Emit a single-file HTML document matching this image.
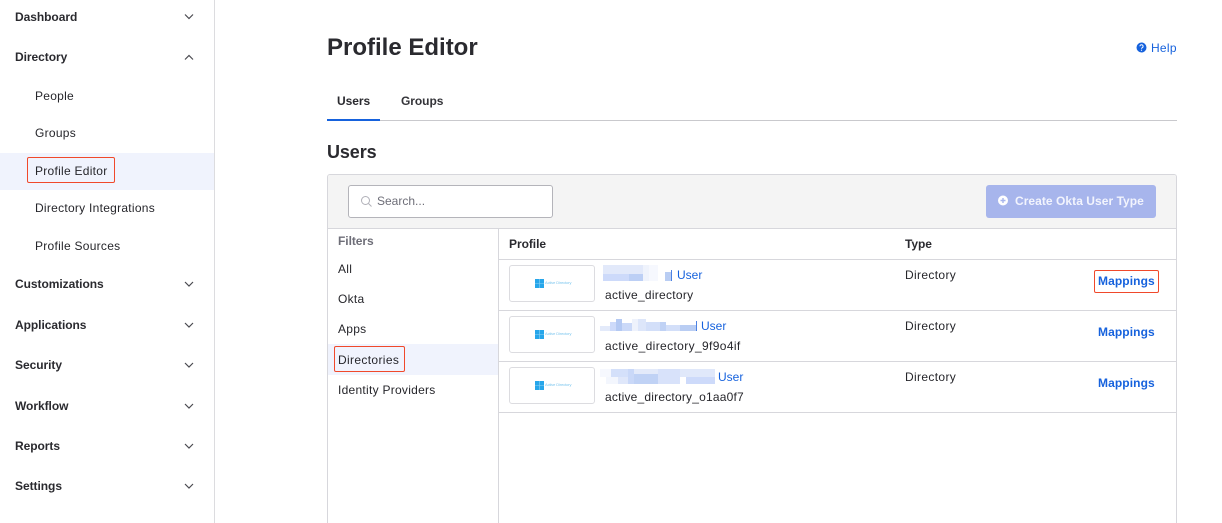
<!DOCTYPE html>
<html><head><meta charset="utf-8">
<style>
html,body{margin:0;padding:0;background:#fff;width:1222px;height:523px;overflow:hidden;}
body{position:relative;font-family:"Liberation Sans",sans-serif;color:#1d1d21;}
.t{position:absolute;white-space:nowrap;font-size:12px;line-height:16px;letter-spacing:.27px;color:#26262b;}
.b{font-weight:bold;letter-spacing:-.05px;color:#2a2a2f;}
.r{position:absolute;}
.red{position:absolute;border:1px solid #f0492b;border-radius:2px;box-sizing:border-box;}
.t.blue{color:#1662dd;}
.thumb{position:absolute;left:509px;width:86px;height:37px;border:1px solid #dcdce0;border-radius:3px;box-sizing:border-box;background:#fff;}
.ad{position:absolute;left:545px;font-size:4px;line-height:6px;letter-spacing:-.1px;color:#7cc6ee;white-space:nowrap;}
svg{position:absolute;overflow:visible;}
</style></head><body>

<!-- sidebar -->
<div class="r" style="left:214px;top:0;width:1px;height:523px;background:#dcdcdf"></div>
<div class="r" style="left:0;top:153px;width:214px;height:37px;background:#f0f3fd"></div>
<div class="t b" style="left:15px;top:9px">Dashboard</div>
<div class="t b" style="left:15px;top:49px">Directory</div>
<div class="t" style="left:35px;top:88px">People</div>
<div class="t" style="left:35px;top:125px">Groups</div>
<div class="t" style="left:35px;top:163px">Profile Editor</div>
<div class="t" style="left:35px;top:200px">Directory Integrations</div>
<div class="t" style="left:35px;top:238px">Profile Sources</div>
<div class="t b" style="left:15px;top:276px">Customizations</div>
<div class="t b" style="left:15px;top:317px">Applications</div>
<div class="t b" style="left:15px;top:357px">Security</div>
<div class="t b" style="left:15px;top:398px">Workflow</div>
<div class="t b" style="left:15px;top:438px">Reports</div>
<div class="t b" style="left:15px;top:478px">Settings</div>
<div class="red" style="left:27px;top:157px;width:88px;height:26px"></div>
<svg style="left:0;top:0" width="214" height="523" fill="none" stroke="#4a4a50" stroke-width="1.2">
<path d="M185 14.500l4 4 4-4"/>
<path d="M185 59.500l4-4 4 4"/>
<path d="M185 282l4 4 4-4"/>
<path d="M185 323l4 4 4-4"/>
<path d="M185 363l4 4 4-4"/>
<path d="M185 404l4 4 4-4"/>
<path d="M185 444l4 4 4-4"/>
<path d="M185 484l4 4 4-4"/>
</svg>

<!-- header -->
<div class="t b" style="left:327px;top:33px;font-size:24px;line-height:30px;letter-spacing:0">Profile Editor</div>
<svg style="left:1136px;top:42px" width="11" height="11"><circle cx="5.500" cy="5.500" r="5" fill="#1662dd"/><path d="M3.900 4.300a1.600 1.600 0 1 1 2.400 1.400c-.5.300-.8.500-.8 1" fill="none" stroke="#fff" stroke-width="1"/><circle cx="5.500" cy="8.200" r=".6" fill="#fff"/></svg>
<div class="t blue" style="left:1151px;top:40px">Help</div>

<!-- tabs -->
<div class="t b" style="left:337px;top:93px">Users</div>
<div class="t b" style="left:401px;top:93px;color:#35353a">Groups</div>
<div class="r" style="left:327px;top:120px;width:850px;height:1px;background:#c9c9cd"></div>
<div class="r" style="left:327px;top:119px;width:53px;height:2px;background:#1662dd"></div>
<div class="t b" style="left:327px;top:141px;font-size:18px;line-height:22px;letter-spacing:-.1px">Users</div>

<!-- panel -->
<div class="r" style="left:327px;top:174px;width:850px;height:349px;border:1px solid #d7d7dc;border-bottom:0;border-radius:3px 3px 0 0;box-sizing:border-box"></div>
<div class="r" style="left:328px;top:175px;width:848px;height:53px;background:#f4f4f4;border-radius:2px 2px 0 0"></div>
<div class="r" style="left:328px;top:228px;width:848px;height:1px;background:#d7d7dc"></div>
<div class="r" style="left:348px;top:185px;width:205px;height:33px;background:#fff;border:1px solid #b4b4ba;border-radius:3px;box-sizing:border-box"></div>
<svg style="left:360px;top:195px" width="13" height="13" fill="none" stroke="#b0b0b8" stroke-width="1"><circle cx="5.500" cy="5.500" r="4"/><path d="M8.500 8.500l3 3"/></svg>
<div class="t" style="left:377px;top:193px;color:#6e6e78;letter-spacing:0">Search...</div>
<div class="r" style="left:986px;top:185px;width:170px;height:33px;background:#a7b5ec;border-radius:3px"></div>
<svg style="left:998px;top:195px" width="11" height="11"><circle cx="5" cy="5.500" r="5" fill="#fff"/><path d="M5 3v5M2.500 5.500h5" stroke="#a7b5ec" stroke-width="1.400"/></svg>
<div class="t b" style="left:1015px;top:193px;color:#f2f4fd;letter-spacing:.05px">Create Okta User Type</div>

<!-- filters -->
<div class="r" style="left:498px;top:229px;width:1px;height:294px;background:#d7d7dc"></div>
<div class="r" style="left:328px;top:344px;width:170px;height:31px;background:#f0f3fd"></div>
<div class="t b" style="left:338px;top:233px;color:#6e6e78">Filters</div>
<div class="t" style="left:338px;top:261px">All</div>
<div class="t" style="left:338px;top:291px">Okta</div>
<div class="t" style="left:338px;top:321px">Apps</div>
<div class="t" style="left:338px;top:352px;letter-spacing:.35px">Directories</div>
<div class="t" style="left:338px;top:382px">Identity Providers</div>
<div class="red" style="left:334px;top:346px;width:71px;height:26px"></div>

<!-- table -->
<div class="t b" style="left:509px;top:236px">Profile</div>
<div class="t b" style="left:905px;top:236px">Type</div>
<div class="r" style="left:499px;top:259px;width:677px;height:1px;background:#d7d7dc"></div>
<div class="r" style="left:499px;top:310px;width:677px;height:1px;background:#d7d7dc"></div>
<div class="r" style="left:499px;top:361px;width:677px;height:1px;background:#d7d7dc"></div>
<div class="r" style="left:499px;top:412px;width:677px;height:1px;background:#d7d7dc"></div>

<!-- thumbs -->
<div class="thumb" style="top:265px"></div>
<div class="thumb" style="top:316px"></div>
<div class="thumb" style="top:367px"></div>
<svg style="left:535px;top:279px" width="9" height="9"><rect width="9" height="9" fill="#27a6ea"/><path d="M4.500 0v9M0 4.500h9" stroke="#8fd2f4" stroke-width=".6"/></svg>
<svg style="left:535px;top:330px" width="9" height="9"><rect width="9" height="9" fill="#27a6ea"/><path d="M4.500 0v9M0 4.500h9" stroke="#8fd2f4" stroke-width=".6"/></svg>
<svg style="left:535px;top:381px" width="9" height="9"><rect width="9" height="9" fill="#27a6ea"/><path d="M4.500 0v9M0 4.500h9" stroke="#8fd2f4" stroke-width=".6"/></svg>
<div class="ad" style="top:280px">Active Directory</div>
<div class="ad" style="top:331px">Active Directory</div>
<div class="ad" style="top:382px">Active Directory</div>

<!-- blurred names -->
<svg style="left:0;top:0" width="1222" height="523" shape-rendering="crispEdges">
<rect x="603" y="265" width="40" height="9" fill="#e2e9fa"/>
<rect x="643" y="265" width="6" height="16" fill="#eff3fc"/>
<rect x="649" y="265" width="9" height="16" fill="#f6f8fe"/>
<rect x="603" y="274" width="26" height="7" fill="#cddafa"/>
<rect x="629" y="274" width="14" height="7" fill="#bccff5"/>
<rect x="665" y="272" width="6" height="9" fill="#b9cdf3"/>
<rect x="671" y="270" width="1" height="11" fill="#4d82e3"/>
<rect x="600" y="326" width="10" height="5" fill="#e3eafa"/>
<rect x="610" y="322" width="6" height="9" fill="#cddafa"/>
<rect x="616" y="319" width="6" height="12" fill="#b4c9f3"/>
<rect x="622" y="323" width="10" height="8" fill="#cbd9f8"/>
<rect x="632" y="319" width="6" height="12" fill="#eef2fc"/>
<rect x="638" y="319" width="8" height="12" fill="#dde6fa"/>
<rect x="646" y="322" width="14" height="9" fill="#d3dff9"/>
<rect x="660" y="322" width="6" height="9" fill="#c0d2f5"/>
<rect x="666" y="325" width="14" height="6" fill="#d3dff9"/>
<rect x="680" y="325" width="16" height="6" fill="#b9cdf3"/>
<rect x="696" y="321" width="1" height="10" fill="#4d82e3"/>
<rect x="600" y="369" width="11" height="8" fill="#f6f8fe"/>
<rect x="606" y="377" width="12" height="7" fill="#f3f6fd"/>
<rect x="611" y="369" width="17" height="8" fill="#d4e0fa"/>
<rect x="618" y="377" width="10" height="7" fill="#dfe7fa"/>
<rect x="628" y="369" width="6" height="15" fill="#c9d8f8"/>
<rect x="634" y="374" width="24" height="10" fill="#c0d2f5"/>
<rect x="634" y="369" width="24" height="5" fill="#e3eafa"/>
<rect x="658" y="369" width="22" height="15" fill="#d8e2fa"/>
<rect x="680" y="369" width="35" height="8" fill="#e0e8fa"/>
<rect x="686" y="377" width="29" height="7" fill="#cddafa"/>
</svg>

<div class="t blue" style="left:677px;top:267px;letter-spacing:0">User</div>
<div class="t blue" style="left:701px;top:318px;letter-spacing:0">User</div>
<div class="t blue" style="left:718px;top:369px;letter-spacing:0">User</div>
<div class="t" style="left:605px;top:287px">active_directory</div>
<div class="t" style="left:605px;top:338px;letter-spacing:.37px">active_directory_9f9o4if</div>
<div class="t" style="left:605px;top:389px;letter-spacing:.2px">active_directory_o1aa0f7</div>
<div class="t" style="left:905px;top:267px;letter-spacing:.35px">Directory</div>
<div class="t" style="left:905px;top:318px;letter-spacing:.35px">Directory</div>
<div class="t" style="left:905px;top:369px;letter-spacing:.35px">Directory</div>
<div class="t b blue" style="left:1098px;top:273px;letter-spacing:.1px">Mappings</div>
<div class="t b blue" style="left:1098px;top:324px;letter-spacing:.1px">Mappings</div>
<div class="t b blue" style="left:1098px;top:375px;letter-spacing:.1px">Mappings</div>
<div class="red" style="left:1094px;top:270px;width:65px;height:23px"></div>

</body></html>
